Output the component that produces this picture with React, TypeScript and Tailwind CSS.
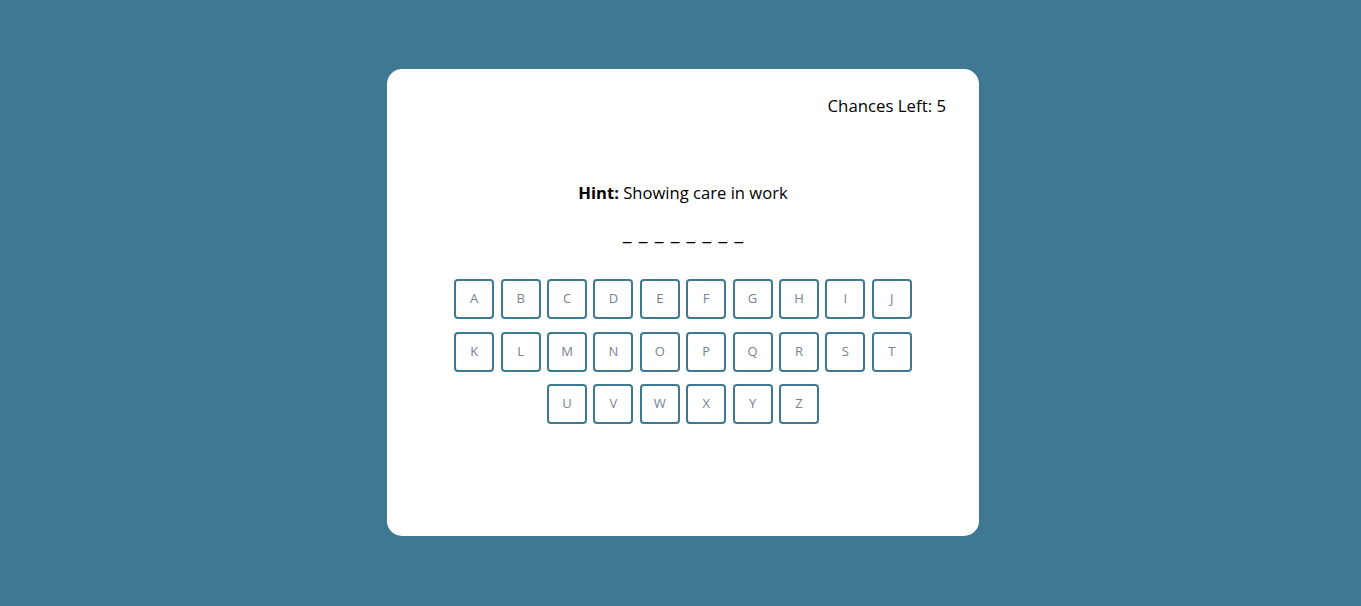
import React from "react";

const letters = "ABCDEFGHIJKLMNOPQRSTUVWXYZ".split("");

export default function App() {
  return (
    <div
      className="w-full h-[606px] bg-[#3e7991] flex items-start justify-center pt-[69px] pl-[5px]"
      style={{ fontFamily: '"Open Sans", "Liberation Sans", sans-serif' }}
    >
      <div className="w-[592px] h-[467px] bg-white rounded-[15px] flex flex-col pt-[25px] pr-[33px]">
        <div className="text-right text-[16.8px] leading-[24px] text-black">Chances Left: 5</div>
        <div className="mt-[63px] text-center text-[16.6px] leading-[24px] text-black pl-[33px]">
          <span className="font-bold">Hint:</span> Showing care in work
        </div>
        <div className="mt-[16px] flex justify-center gap-[7.2px] pl-[33px] text-[20px] leading-[24px] text-black">
          {Array.from({ length: 8 }).map((_, i) => (
            <span key={i}>_</span>
          ))}
        </div>
        <div className="mt-[34px] pl-[33px]">
          <div className="w-[470px] mx-auto flex flex-wrap justify-center gap-x-[6.4px] gap-y-[12.5px]">
            {letters.map((l) => (
              <button
                key={l}
                className="w-10 h-10 border-2 border-[#3e7991] rounded-[4px] text-[13px] text-[#7b8090] flex items-center justify-center bg-white"
              >
                {l}
              </button>
            ))}
          </div>
        </div>
      </div>
    </div>
  );
}
